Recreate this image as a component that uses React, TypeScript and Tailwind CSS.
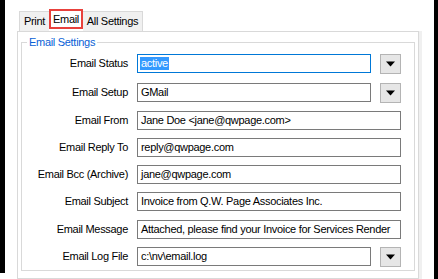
import React from "react";

type Row = {
  label: string;
  value: string;
  dropdown?: boolean;
  focused?: boolean;
  space: string;
};

const rows: Row[] = [
  { label: "Email Status", value: "active", dropdown: true, focused: true, space: "mt-[11px]" },
  { label: "Email Setup", value: "GMail", dropdown: true, space: "mt-[9px]" },
  { label: "Email From", value: "Jane Doe <jane@qwpage.com>", space: "mt-[8px]" },
  { label: "Email Reply To", value: "reply@qwpage.com", space: "mt-[8px]" },
  { label: "Email Bcc (Archive)", value: "jane@qwpage.com", space: "mt-[8px]" },
  { label: "Email Subject", value: "Invoice from Q.W. Page Associates Inc.", space: "mt-[8px]" },
  { label: "Email Message", value: "Attached, please find your Invoice for Services Render", space: "mt-[9px]" },
  { label: "Email Log File", value: "c:\\nv\\email.log", dropdown: true, space: "mt-[8px]" },
];

function DropButton() {
  return (
    <div className="w-[21px] h-[20px] border border-[#b4b4b4] bg-[#e6e6e6] flex items-center justify-center shrink-0">
      <svg width="9" height="6" viewBox="0 0 9 6" className="block">
        <polygon points="0,0.5 9,0.5 4.5,5.5" fill="#000" />
        <rect x="3" y="0" width="3" height="1" fill="#6d6d6d" />
      </svg>
    </div>
  );
}

function Field({ row }: { row: Row }) {
  return (
    <div className={`flex items-start ${row.space}`}>
      <div className="w-[106px] h-[19px] flex items-center justify-end shrink-0 whitespace-nowrap">
        {row.label}
      </div>
      <div className="ml-[9px] flex items-start gap-[9px]">
        <div
          className={`h-[19px] border flex items-center pl-[2px] overflow-hidden whitespace-nowrap ${
            row.dropdown ? "w-[234px]" : "w-[264px]"
          } ${row.focused ? "border-[#0078d7]" : "border-[#7a7a7a]"}`}
        >
          {row.focused ? (
            <span className="bg-[#3399ff] text-white h-[13px] leading-[13px] px-px">{row.value}</span>
          ) : (
            <span className="pl-px">{row.value}</span>
          )}
        </div>
        {row.dropdown && <DropButton />}
      </div>
    </div>
  );
}

export default function App() {
  return (
    <div
      className="w-[438px] h-[279px] bg-white flex overflow-hidden text-[11px] tracking-[-0.3px] text-black"
      style={{ fontFamily: '"Liberation Sans", Arial, sans-serif' }}
    >
      {/* left window edge */}
      <div className="w-[5px] h-[273px] bg-black shrink-0"></div>

      <div className="flex-1 pl-[12px] pt-[9px] flex flex-col">
        {/* Tabs */}
        <div className="h-[22px] flex items-end pl-[2px]">
          <div className="w-[30px] h-[20px] border-t border-l border-[#d9d9d9] bg-[#f0f0f0] flex items-center justify-center">
            Print
          </div>
          <div className="w-[34px] h-[22px] flex flex-col">
            <div className="h-[20px] border-2 border-[#e8413c] bg-white flex items-center justify-center">
              Email
            </div>
          </div>
          <div className="w-[60px] h-[20px] border-t border-r border-[#d9d9d9] bg-[#f0f0f0] flex items-center justify-center">
            All Settings
          </div>
        </div>

        {/* Panel */}
        <div className="flex">
          <div className="w-[402px] h-[248px] border border-[#d9d9d9] bg-white px-[3px] pt-[10px]">
            <div className="relative h-[229px] border border-[#d9d9d9]">
              <span className="absolute left-[5px] top-[-8px] px-[2px] bg-white text-[#0a5fd6] leading-[14px]">
                Email Settings
              </span>
              <div className="flex flex-col">
                {rows.map((r) => (
                  <Field key={r.label} row={r} />
                ))}
              </div>
            </div>
          </div>
          <div className="w-[3px] h-[248px] bg-[#f0f0f0]"></div>
        </div>
      </div>

      {/* right window edge */}
      <div className="w-[4px] h-[279px] bg-black shrink-0"></div>
    </div>
  );
}
